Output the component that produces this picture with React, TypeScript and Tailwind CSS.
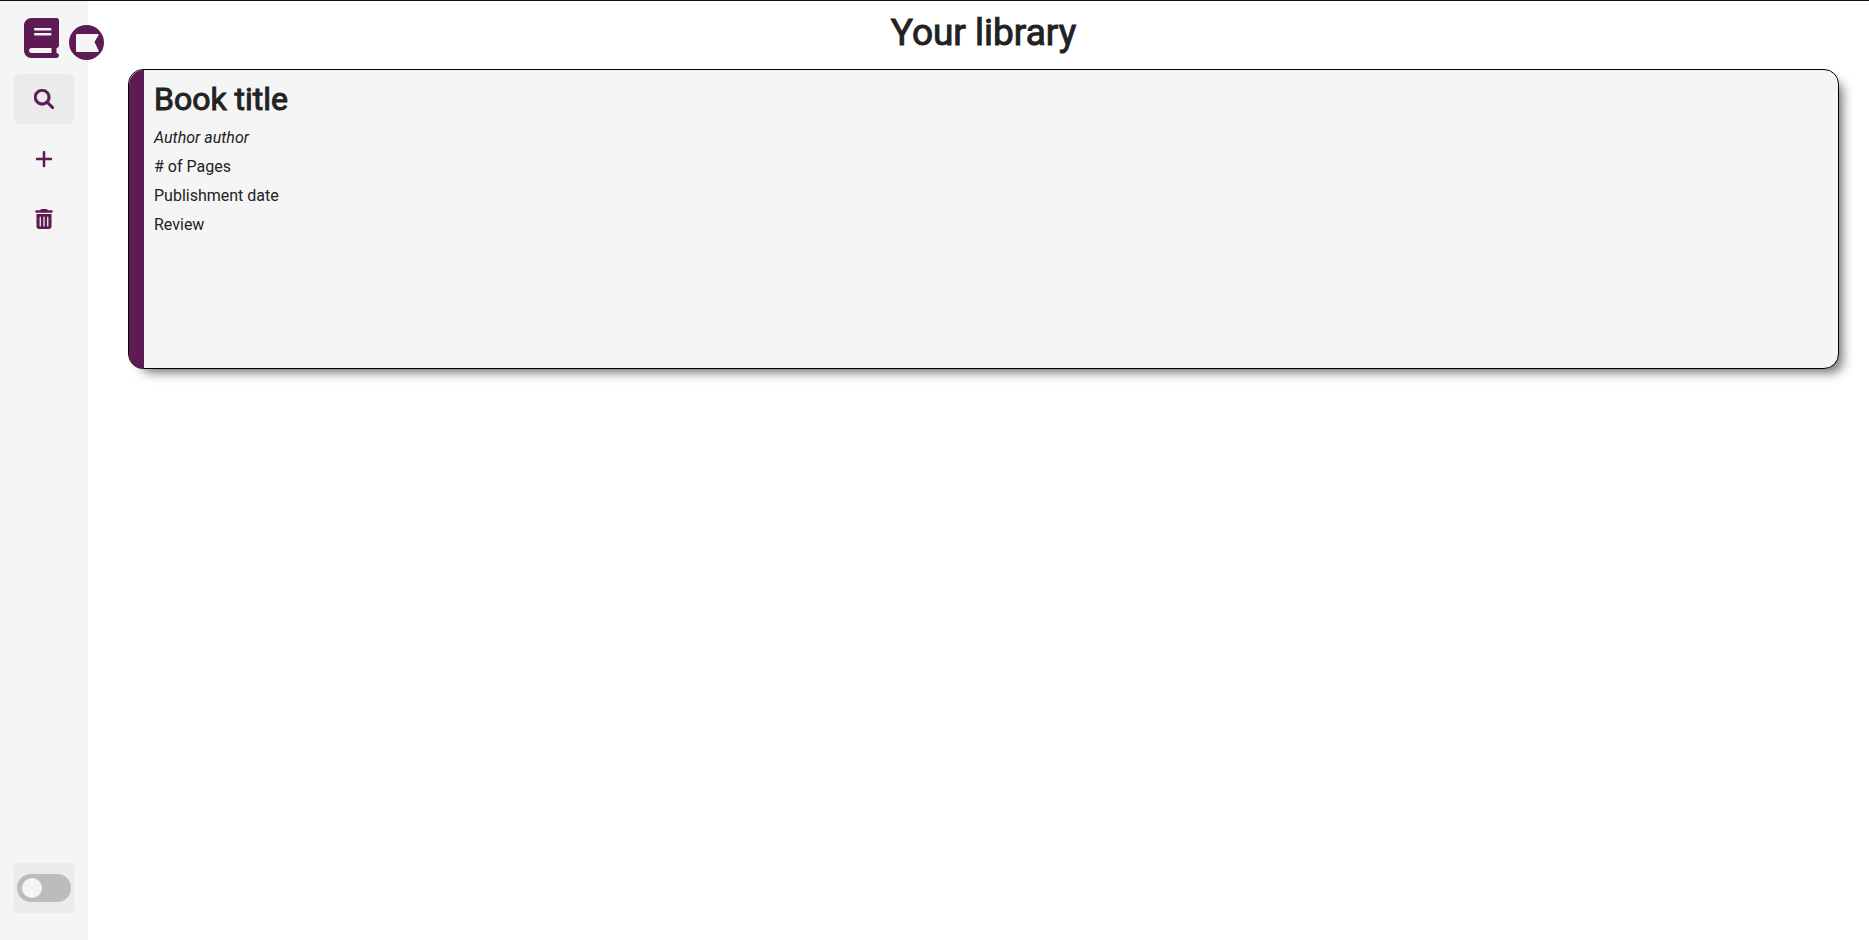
import type { ReactNode } from "react";
import { FaBook, FaMagnifyingGlass, FaPlus, FaTrashCan } from "react-icons/fa6";

function NavButton({ label, active = false, children }: { label: string; active?: boolean; children: ReactNode }) {
  return (
    <button
      type="button"
      aria-label={label}
      className={`flex h-[50px] w-[60px] items-center justify-center rounded-[5px] pb-px text-xl ${active ? "bg-[#ebebeb]" : ""}`}
    >
      {children}
    </button>
  );
}

function Sidebar() {
  return (
    <aside className="flex w-[88px] shrink-0 flex-col items-center bg-[#f5f5f5] pb-[27px] text-[#5e1a55]">
      <div className="relative flex w-full pt-[17px] pl-6">
        <FaBook className="h-10 w-[35px]" />
        <button
          type="button"
          aria-label="Expand sidebar"
          className="absolute top-6 -right-4 size-[35px] rounded-full bg-[#5e1a55] text-[#f5f5f5]"
        >
          <svg viewBox="0 0 35 35" className="size-full" aria-hidden="true">
            <path fill="currentColor" d="M8 9H29Q30 9 29.6 10L25.5 17L29.6 25.5Q30 27 29 27H8Q7 27 7 26V10Q7 9 8 9Z" />
          </svg>
        </button>
      </div>
      <nav className="mt-4 flex flex-col gap-[10px]">
        <NavButton label="Search" active>
          <FaMagnifyingGlass className="[stroke-width:14]" />
        </NavButton>
        <NavButton label="Add book">
          <FaPlus />
        </NavButton>
        <NavButton label="Delete book">
          <FaTrashCan />
        </NavButton>
      </nav>
      <label className="mt-auto flex h-[50px] w-[60px] items-center justify-center rounded-[5px] bg-[#ebebeb]">
        <input
          type="checkbox"
          role="switch"
          aria-label="Dark mode"
          className="flex h-7 w-[54px] appearance-none items-center rounded-full bg-[#bdbbbc] px-[5px] before:size-5 before:rounded-full before:bg-[#f5f5f5] before:content-[''] checked:justify-end"
        />
      </label>
    </aside>
  );
}

function BookCard() {
  return (
    <article className="relative min-h-[300px] rounded-[15px] border border-black bg-[#f5f5f5] pt-[10px] pl-[25px] shadow-[8px_8px_12px_-5px_rgba(0,0,0,0.6)]">
      <div className="absolute top-0 -bottom-px left-0 w-[15px] rounded-l-[15px] bg-[#5e1a55]" />
      <h2 className="text-[32px] leading-[38px] font-normal [-webkit-text-stroke:1px_#222222]">Book title</h2>
      <div className="mt-[10px] flex flex-col gap-[10px] text-base leading-[19px]">
        <p className="italic">Author author</p>
        <p># of Pages</p>
        <p>Publishment date</p>
        <p>Review</p>
      </div>
    </article>
  );
}

export default function App() {
  return (
    <div className="flex min-h-screen border-t border-[#150a20] bg-white font-['Roboto',sans-serif] text-[#222222]">
      <Sidebar />
      <main className="min-w-0 flex-1 pt-[10px] pr-[30px] pl-10">
        <h1 className="mb-[14px] text-center text-[37px] leading-[44px] font-normal [-webkit-text-stroke:1px_#222222]">
          Your library
        </h1>
        <BookCard />
      </main>
    </div>
  );
}
